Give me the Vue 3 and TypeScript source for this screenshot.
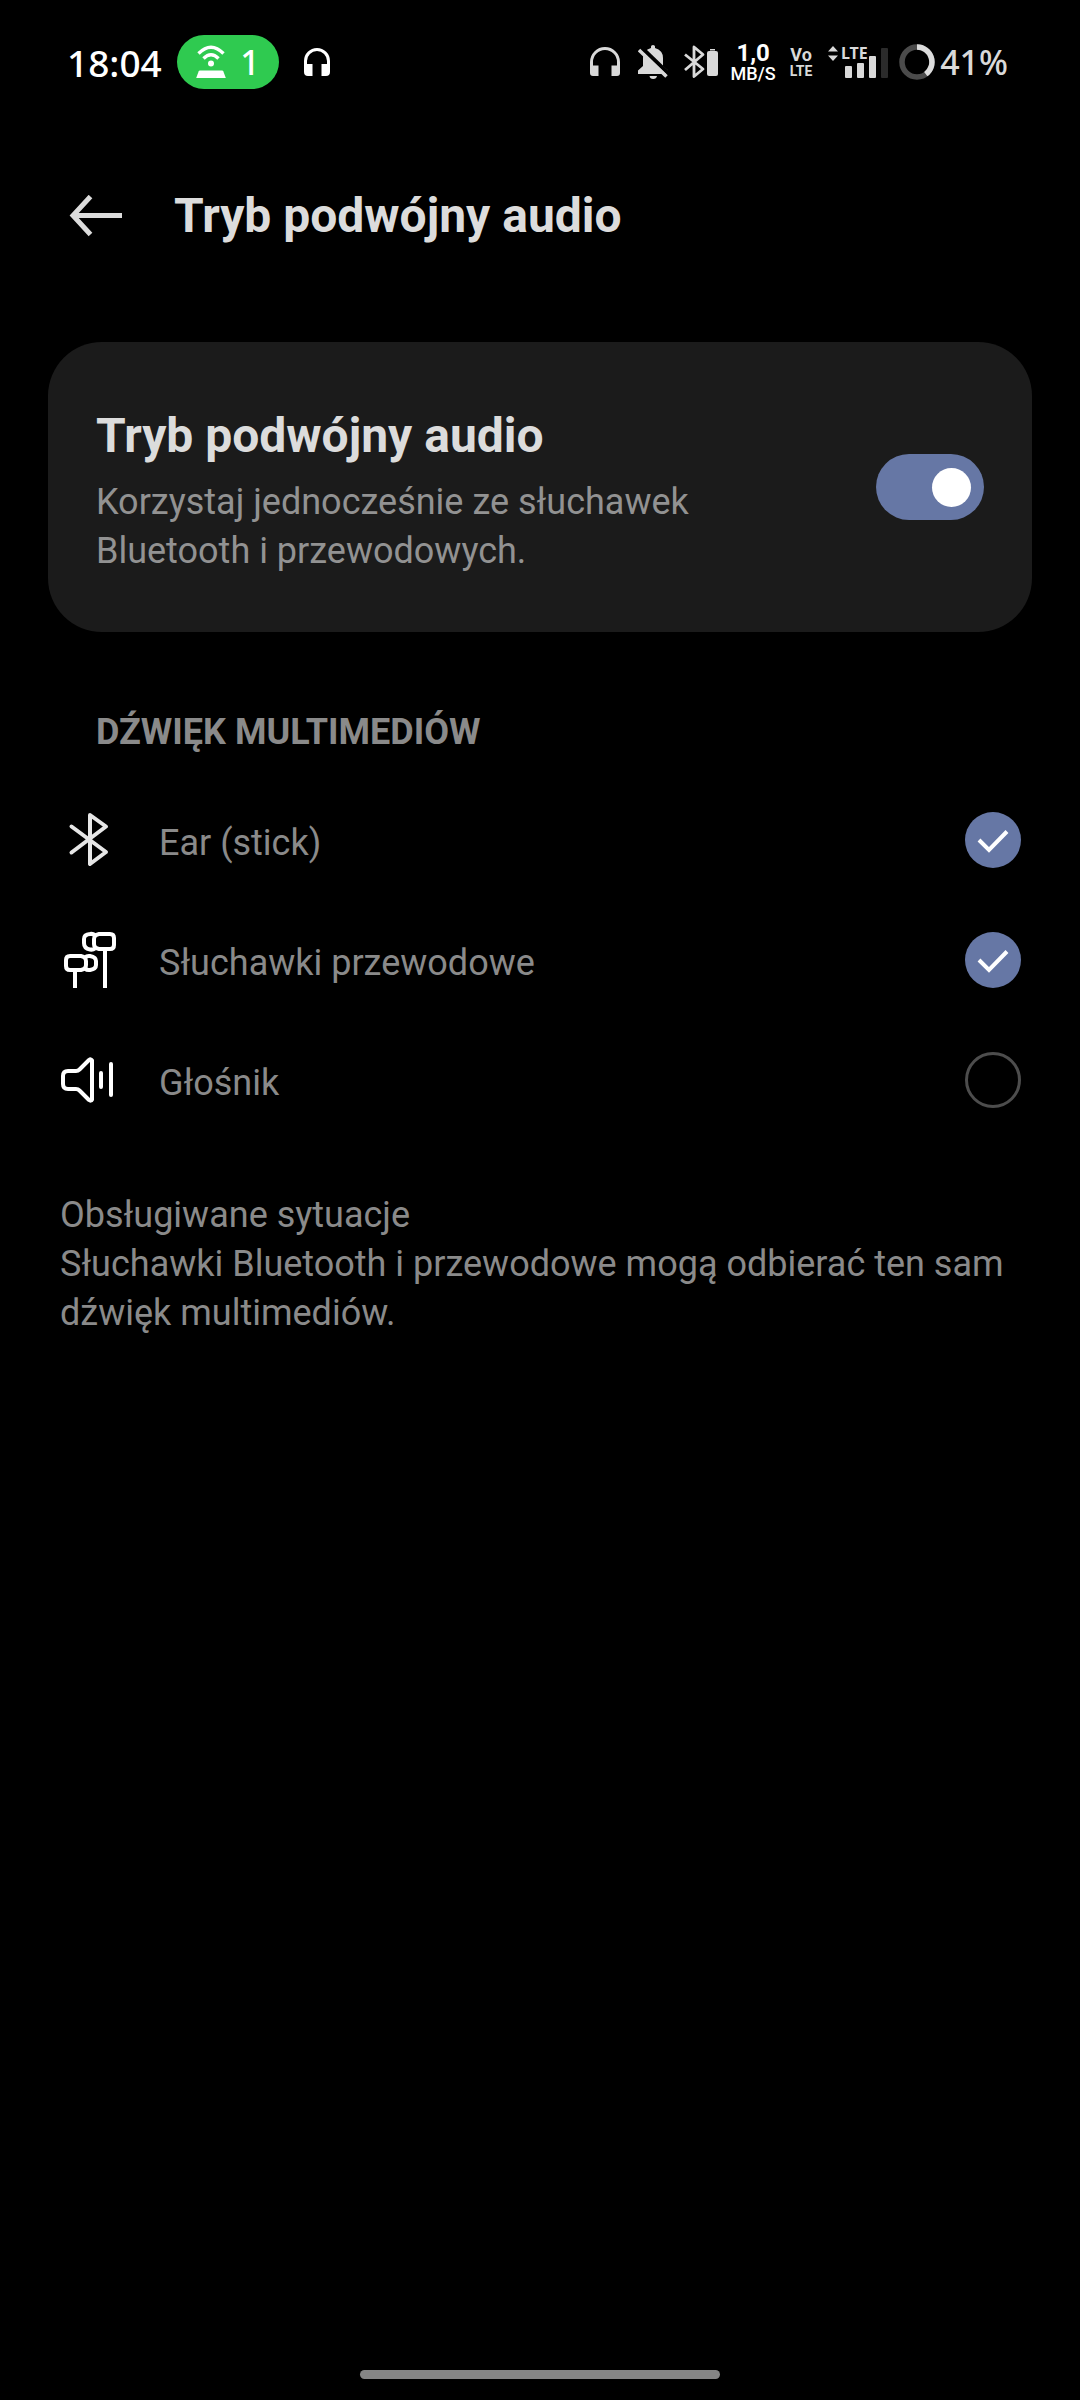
<script setup lang="ts">
import { ref } from 'vue'

type IconName = 'bluetooth' | 'earphones' | 'speaker'

interface Device {
  id: string
  label: string
  icon: IconName
  selected: boolean
}

const dualAudio = ref(true)

const devices = ref<Device[]>([
  { id: 'ear-stick', label: 'Ear (stick)', icon: 'bluetooth', selected: true },
  { id: 'wired', label: 'Słuchawki przewodowe', icon: 'earphones', selected: true },
  { id: 'speaker', label: 'Głośnik', icon: 'speaker', selected: false },
])
</script>

<template>
  <div class="screen">
    <div class="status">
      <span class="clock">18:04</span>
      <span class="hotspot">
        <svg width="30" height="34" viewBox="0 0 30 34" aria-hidden="true">
          <g fill="none" stroke="#fff" stroke-width="3.4">
            <path d="M2.500 8.500 Q15 -4 27.500 8.500" />
            <path d="M7.500 13.500 Q15 6 22.500 13.500" />
          </g>
          <circle cx="15" cy="18.500" r="3" fill="#fff" />
          <path d="M4 25.500h22q1 0 1.400 1l2.400 6.500H0.200l2.400-6.500q.4-1 1.400-1z" fill="#fff" />
        </svg>
        <span>1</span>
      </span>
      <svg class="media" width="26" height="28" viewBox="0 0 26 28" aria-hidden="true">
        <path d="M1.500 18V13a11.500 11.500 0 0 1 23 0v5" fill="none" stroke="#fff" stroke-width="3" />
        <path d="M0 16h8.500v12H4a4 4 0 0 1-4-4zM17.500 16H26v8a4 4 0 0 1-4 4h-4.500z" fill="#fff" />
      </svg>

      <div class="indicators">
        <svg width="30" height="30" viewBox="0 0 30 30" aria-hidden="true">
          <path d="M1.500 20V15a13.500 13.500 0 0 1 27 0v5" fill="none" stroke="#d9d9d9" stroke-width="3" />
          <path d="M0 18.500h8.500V29H3a3 3 0 0 1-3-3zM21.500 18.500H30V26a3 3 0 0 1-3 3h-5.500z" fill="#d9d9d9" />
        </svg>
        <svg class="bell" width="31" height="34" viewBox="0 0 31 34" aria-hidden="true">
          <path d="M13 3V1.500q0-1.500 2-1.500t2 1.500V3q8 2.500 8 10v8l5 4.500V29H0v-3.500l5-4.500v-8Q5 5.500 13 3zM11.500 31h7.500q-.5 3-3.800 3t-3.700-3z" fill="#d9d9d9" />
          <path d="M4 3 32 30" stroke="#000" stroke-width="4" />
          <path d="M1 5l27.500 26.500" stroke="#d9d9d9" stroke-width="3.500" />
        </svg>
        <svg class="bt" width="35" height="34" viewBox="0 0 35 34" aria-hidden="true">
          <path d="M1 9.500 19 24 10 31.500V2l9 7.500L1 25" fill="none" stroke="#d9d9d9" stroke-width="2.800" stroke-linejoin="round" />
          <path d="M26 4h5v1.500h-5z" fill="#d9d9d9" />
          <rect x="23" y="6" width="11" height="25" rx="2" fill="#d9d9d9" />
        </svg>
        <span class="speed"><b>1,0</b><small>MB/S</small></span>
        <span class="volte"><b>Vo</b><small>LTE</small></span>
        <svg class="signal" width="60" height="42" viewBox="0 -4 60 42" aria-hidden="true">
          <path d="M0 6.500 5 1l5 5.500zM0 10.500h10L5 16z" fill="#d9d9d9" />
          <text x="13" y="14" class="lte">LTE</text>
          <g fill="#d9d9d9">
            <rect x="17" y="21" width="7" height="12" rx="1" />
            <rect x="29" y="18" width="7" height="15" rx="1" />
            <rect x="41" y="11" width="7" height="22" rx="1" />
          </g>
          <rect x="53" y="3" width="7" height="30" rx="1" fill="#2b2b2b" />
        </svg>
        <svg class="ring" width="36" height="36" viewBox="0 0 36 36" aria-hidden="true">
          <circle cx="18" cy="18" r="15" fill="none" stroke="#4b4b4b" stroke-width="5.500" />
          <path d="M18 3a15 15 0 0 1 8.800 27.100" fill="none" stroke="#dcdcdc" stroke-width="5.500" />
        </svg>
        <span class="percent">41%</span>
      </div>
    </div>

    <header class="header">
      <button class="back" type="button" aria-label="Wstecz">
        <svg width="54" height="42" viewBox="0 0 54 42" aria-hidden="true">
          <path d="M53 20.500H4M21.500 1.500 4 20.500l17.500 19" fill="none" stroke="#dcdcdc" stroke-width="5" />
        </svg>
      </button>
      <h1>Tryb podwójny audio</h1>
    </header>

    <main>
      <label class="card">
        <span class="card-text">
          <span class="card-title">Tryb podwójny audio</span>
          <span class="card-sub">Korzystaj jednocześnie ze słuchawek Bluetooth i przewodowych.</span>
        </span>
        <input v-model="dualAudio" class="switch" type="checkbox" role="switch" />
      </label>

      <h2>DŹWIĘK MULTIMEDIÓW</h2>
      <label v-for="device in devices" :key="device.id" class="row">
        <svg width="60" height="60" viewBox="0 0 60 60" fill="none" stroke="#fff" stroke-width="4" aria-hidden="true">
          <path v-if="device.icon === 'bluetooth'" d="M11.500 16.500 46 42 30 54V5l16 11.500L11.500 42.500" stroke="#e6e6e6" stroke-linecap="round" stroke-linejoin="round" />
          <g v-else-if="device.icon === 'earphones'">
            <path d="M39 4h11q4 0 4 4v7q0 4-4 4H39q-5-1-5-5V9q0-4 5-5z" />
            <path d="M35 5q-2-1.500-5-1-6 .5-6 5v4q0 5.500 6 6.500 3 .5 5-1" />
            <path d="M45 19v39" />
            <path d="M10 26h11q5 1 5 5v4q0 4-5 5H10q-4 0-4-4v-6q0-4 4-4z" />
            <path d="M25 27.500q2-2 5-1.500 6 1 6 5v4q0 4-6 5-3 .5-5-1.500" />
            <path d="M15 40v18" />
          </g>
          <g v-else stroke-linecap="round" stroke-linejoin="round">
            <path d="M8 21h8q2 0 3.500-1.500L29 10q2-1.500 3 .5v39q-1 2-3 .5L19.500 40.500Q18 39 16 39H8q-5 0-5-5v-8q0-5 5-5z" />
            <path d="M41 23v14M51 14v31" />
          </g>
        </svg>
        <span class="row-label">{{ device.label }}</span>
        <span class="check">
          <input v-model="device.selected" type="checkbox" />
          <svg v-if="device.selected" width="56" height="56" viewBox="0 0 56 56" aria-hidden="true">
            <path d="M14 28l10 10 18-18.500" fill="none" stroke="#fff" stroke-width="4" />
          </svg>
        </span>
      </label>

      <p class="note">
        Obsługiwane sytuacje<br />
        Słuchawki Bluetooth i przewodowe mogą odbierać ten sam dźwięk multimediów.
      </p>
    </main>

    <div class="home"></div>
  </div>
</template>

<style>
body {
  background: #000;
}
</style>

<style scoped>
.screen {
  min-height: 100vh;
  display: flex;
  flex-direction: column;
  background: #000;
  color: #8a8a8a;
  font-family: Roboto, "Noto Sans", sans-serif;
  font-size: 36px;
  line-height: 49px;
}
svg {
  display: block;
  flex: none;
}
.status {
  display: flex;
  align-items: center;
  height: 124px;
  padding: 0 72px 0 67px;
  color: #fff;
  font-family: "Noto Sans", sans-serif;
  font-weight: 500;
}
.clock {
  width: 110px;
  font-size: 37px;
}
.hotspot {
  display: flex;
  align-items: center;
  justify-content: center;
  gap: 14px;
  box-sizing: border-box;
  width: 102px;
  height: 54px;
  border-radius: 27px;
  background: #2fca50;
  font-size: 34px;
}
.media {
  margin-left: 25px;
}
.indicators {
  display: flex;
  align-items: center;
  margin-left: auto;
  color: #d9d9d9;
}
.bell {
  margin-left: 18px;
}
.bt {
  margin-left: 15px;
}
.speed,
.volte {
  display: flex;
  flex-direction: column;
  align-items: center;
  font-family: Roboto, sans-serif;
}
.speed {
  width: 46px;
  margin-left: 11px;
  color: #fff;
}
.speed b {
  font-size: 24px;
  font-weight: 700;
  line-height: 24px;
}
.speed small {
  font-size: 18px;
  font-weight: 500;
  line-height: 18px;
}
.volte {
  width: 26px;
  margin-left: 12px;
}
.volte b {
  font-size: 18px;
  font-weight: 700;
  line-height: 18px;
}
.volte small {
  font-size: 14px;
  font-weight: 700;
  line-height: 14px;
}
.signal {
  margin-left: 14px;
}
.lte {
  fill: #d9d9d9;
  font-size: 16px;
  font-weight: 700;
}
.ring {
  margin-left: 11px;
}
.percent {
  margin-left: 5px;
  font-size: 34px;
}
.header {
  display: flex;
  align-items: center;
  height: 184px;
  padding: 0 69px;
}
.back {
  padding: 0;
  border: 0;
  background: none;
}
h1,
.card-title {
  margin: 0;
  color: #dcdcdc;
  font-size: 48px;
  font-weight: 700;
  line-height: 56px;
}
h1 {
  margin-left: 51px;
}
main {
  display: flex;
  flex-direction: column;
}
.card {
  display: flex;
  align-items: center;
  justify-content: space-between;
  margin: 34px 48px 0;
  padding: 0 48px;
  border-radius: 54px;
  background: #1b1b1b;
}
.card-text {
  display: flex;
  flex-direction: column;
  gap: 14px;
  max-width: 640px;
  padding: 66px 0 56px;
}
.card-sub {
  color: #929292;
}
.switch {
  display: flex;
  align-items: center;
  justify-content: flex-start;
  flex: none;
  box-sizing: border-box;
  width: 108px;
  height: 66px;
  margin: 0;
  padding: 0 13px;
  border-radius: 33px;
  background: #444;
  appearance: none;
}
.switch::before {
  content: "";
  width: 39px;
  height: 39px;
  border-radius: 50%;
  background: #fff;
}
.switch:checked {
  justify-content: flex-end;
  background: #6677a5;
}
h2 {
  margin: 76px 96px 23px;
  font-size: 36px;
  font-weight: 700;
  line-height: 49px;
}
.row {
  display: flex;
  align-items: center;
  height: 120px;
  padding: 0 59px 0 60px;
}
.row-label {
  flex: 1;
  padding-top: 7px;
  margin-left: 39px;
}
.check {
  display: grid;
}
.check > * {
  grid-area: 1 / 1;
}
.check svg {
  pointer-events: none;
}
.check input {
  box-sizing: border-box;
  width: 56px;
  height: 56px;
  margin: 0;
  border: 3px solid #4d4d4d;
  border-radius: 50%;
  appearance: none;
}
.check input:checked {
  border: 0;
  background: #6677a5;
}
.note {
  margin: 51px 60px 0;
}
.home {
  width: 33.333%;
  height: 9px;
  margin: auto auto 21px;
  border-radius: 5px;
  background: #858585;
}
</style>
